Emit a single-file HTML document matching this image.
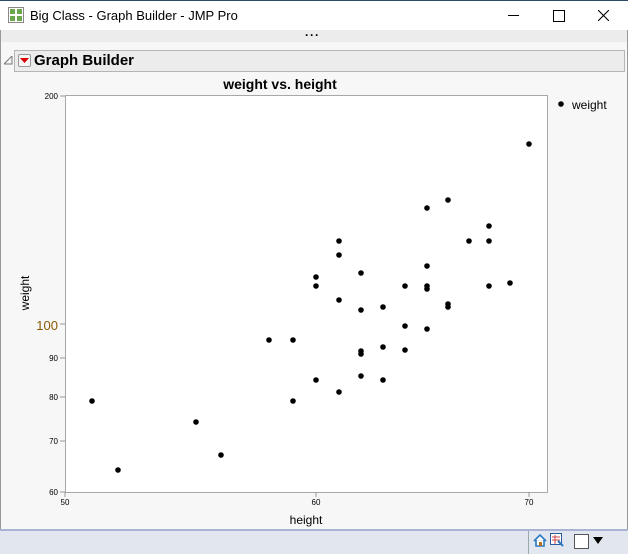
<!DOCTYPE html>
<html><head><meta charset="utf-8"><style>
body{margin:0;width:628px;height:554px;overflow:hidden;background:#f7f7f7;font-family:"Liberation Sans",sans-serif;position:relative}
.a{position:absolute}
</style></head><body>
<div class="a" style="left:0;top:0;width:628px;height:30px;background:#fff;border-top:1px solid #2b4b6b;box-sizing:border-box"></div>
<svg class="a" style="left:8;top:7px;left:8px" width="16" height="16"><rect x="0.5" y="0.5" width="15" height="15" fill="#fff" stroke="#888"/><rect x="2" y="2" width="5" height="5" fill="#6aa84f"/><rect x="9" y="2" width="5" height="5" fill="#6aa84f"/><rect x="2" y="9" width="5" height="5" fill="#6aa84f"/><rect x="9" y="9" width="5" height="5" fill="#6aa84f"/></svg>
<div class="a" style="left:30px;top:8px;font-size:13px;color:#000">Big Class - Graph Builder - JMP Pro</div>
<div class="a" style="left:508px;top:15px;width:11px;height:1px;background:#000"></div>
<div class="a" style="left:553px;top:10px;width:10px;height:10px;border:1px solid #000"></div>
<svg class="a" style="left:598px;top:10px" width="11" height="11"><path d="M0 0L11 11M11 0L0 11" stroke="#000" stroke-width="1.1"/></svg>
<div class="a" style="left:0;top:30px;width:628px;height:12px;background:#ececec"></div>
<div class="a" style="left:305px;top:31px;font-size:12px;font-weight:bold;letter-spacing:1px;line-height:8px">···</div>
<div class="a" style="left:0;top:30px;width:1px;height:500px;background:#999"></div>
<div class="a" style="left:627px;top:30px;width:1px;height:524px;background:#999"></div>
<svg class="a" style="left:4px;top:56px" width="9" height="9"><path d="M8 0L8 8L0 8Z" fill="none" stroke="#777"/></svg>
<div class="a" style="left:14px;top:50px;width:611px;height:22px;background:#ececec;border:1px solid #b5b5b5;box-sizing:border-box"></div>
<div class="a" style="left:18px;top:54px;width:13px;height:13px;border:1px solid #999;border-radius:2px;background:#f5f5f5;box-sizing:border-box"></div>
<svg class="a" style="left:20px;top:58px" width="9" height="6"><path d="M0 0L9 0L4.5 5Z" fill="#d00"/></svg>
<div class="a" style="left:34px;top:52px;font-size:15px;font-weight:bold">Graph Builder</div>
<div class="a" style="left:0;top:76px;width:628px;text-align:center;font-size:14px;font-weight:bold"><span style="position:relative;left:-34px">weight vs. height</span></div>
<svg class="a" style="left:0;top:0" width="628" height="554">
<rect x="65.5" y="95.5" width="482" height="397" fill="#fff" stroke="#a8a8a8"/>
<g stroke="#999"><line x1="60" y1="96" x2="65" y2="96"/><line x1="60" y1="324" x2="65" y2="324"/><line x1="60" y1="358" x2="65" y2="358"/><line x1="60" y1="397" x2="65" y2="397"/><line x1="60" y1="441" x2="65" y2="441"/><line x1="60" y1="492" x2="65" y2="492"/>
<line x1="65" y1="492" x2="65" y2="497"/><line x1="316" y1="492" x2="316" y2="497"/><line x1="529" y1="492" x2="529" y2="497"/></g>
<g font-family="Liberation Sans" font-size="8" fill="#000" text-anchor="end">
<text x="58" y="99">200</text><text x="58" y="361">90</text><text x="58" y="400">80</text><text x="58" y="444">70</text><text x="58" y="495">60</text>
<text x="58" y="330" font-size="13" fill="#8a5a00">100</text></g>
<g font-family="Liberation Sans" font-size="8" text-anchor="middle"><text x="65" y="505">50</text><text x="316" y="505">60</text><text x="529" y="505">70</text></g>
<text x="306" y="524" font-family="Liberation Sans" font-size="12" text-anchor="middle">height</text>
<text transform="translate(29,293) rotate(-90)" font-family="Liberation Sans" font-size="12" text-anchor="middle">weight</text>
<g fill="#000">
<circle cx="92" cy="401" r="2.8"/><circle cx="118" cy="470" r="2.8"/><circle cx="196" cy="422" r="2.8"/><circle cx="221" cy="455" r="2.8"/><circle cx="269" cy="340" r="2.8"/><circle cx="293" cy="340" r="2.8"/><circle cx="293" cy="401" r="2.8"/><circle cx="316" cy="277" r="2.8"/><circle cx="316" cy="286" r="2.8"/><circle cx="316" cy="380" r="2.8"/><circle cx="339" cy="241" r="2.8"/><circle cx="339" cy="255" r="2.8"/><circle cx="339" cy="300" r="2.8"/><circle cx="339" cy="392" r="2.8"/><circle cx="361" cy="273" r="2.8"/><circle cx="361" cy="310" r="2.8"/><circle cx="361" cy="351" r="2.8"/><circle cx="361" cy="354" r="2.8"/><circle cx="361" cy="376" r="2.8"/><circle cx="383" cy="307" r="2.8"/><circle cx="383" cy="347" r="2.8"/><circle cx="383" cy="380" r="2.8"/><circle cx="405" cy="286" r="2.8"/><circle cx="405" cy="326" r="2.8"/><circle cx="405" cy="350" r="2.8"/><circle cx="427" cy="208" r="2.8"/><circle cx="427" cy="266" r="2.8"/><circle cx="427" cy="286" r="2.8"/><circle cx="427" cy="289" r="2.8"/><circle cx="427" cy="329" r="2.8"/><circle cx="448" cy="200" r="2.8"/><circle cx="448" cy="304" r="2.8"/><circle cx="448" cy="307" r="2.8"/><circle cx="469" cy="241" r="2.8"/><circle cx="489" cy="226" r="2.8"/><circle cx="489" cy="241" r="2.8"/><circle cx="489" cy="286" r="2.8"/><circle cx="510" cy="283" r="2.8"/><circle cx="529" cy="144" r="2.8"/>
<circle cx="561" cy="104" r="2.8"/></g>
<text x="572" y="109" font-family="Liberation Sans" font-size="12" fill="#000">weight</text>
</svg>
<div class="a" style="left:0;top:529px;width:628px;height:25px;background:#e1e6ef;border-top:2px solid #a9b4d4;box-sizing:border-box"></div>
<div class="a" style="left:528px;top:531px;width:1px;height:23px;background:#9aa"></div>
<svg class="a" style="left:533px;top:534px" width="14" height="13"><path d="M1 7L7 1L13 7M3 6V12H11V6" fill="#fff" stroke="#2a7ac0" stroke-width="1.6"/><rect x="6" y="8" width="3" height="4" fill="#b07020"/></svg>
<svg class="a" style="left:550px;top:533px" width="14" height="14"><rect x="0.5" y="0.5" width="11" height="11" fill="#fff" stroke="#2a5aa0"/><path d="M2 4H10M2 7H10M5 2V11" stroke="#c44"/><path d="M8 8L13 13" stroke="#2a7ac0" stroke-width="2"/></svg>
<div class="a" style="left:574px;top:534px;width:13px;height:13px;border:1px solid #555;background:#fff"></div>
<svg class="a" style="left:593px;top:537px" width="10" height="7"><path d="M0 0H10L5 7Z" fill="#000"/></svg>
</body></html>
